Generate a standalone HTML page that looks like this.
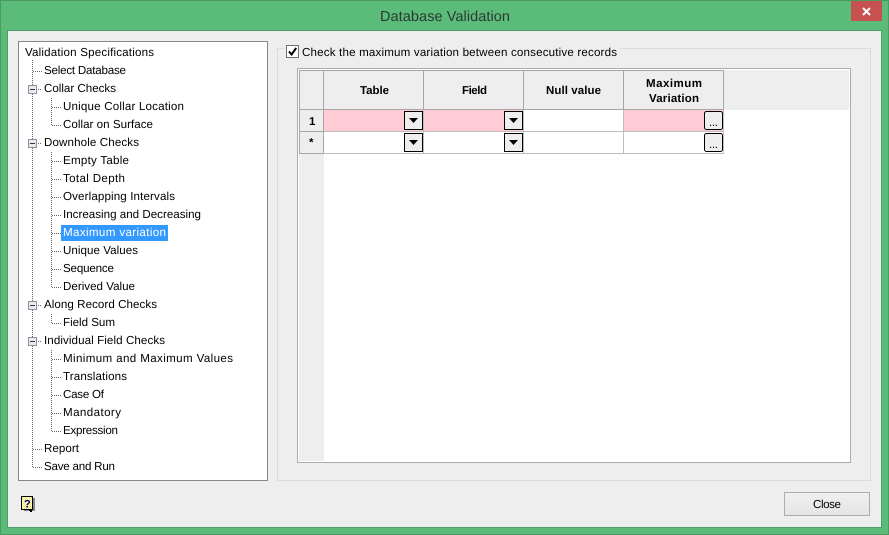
<!DOCTYPE html>
<html><head><meta charset="utf-8"><title>Database Validation</title>
<style>
html,body{margin:0;padding:0;width:889px;height:535px;overflow:hidden;background:#5bbb78}
svg{display:block}
text{font-family:"Liberation Sans",sans-serif;font-size:11.6px;fill:#000;text-rendering:geometricPrecision}
.b{font-weight:bold;font-size:11.5px}
.r{shape-rendering:crispEdges}
</style></head><body>
<svg width="889" height="535" viewBox="0 0 889 535" xmlns="http://www.w3.org/2000/svg">
<defs>
<linearGradient id="g" x1="0" y1="0" x2="0" y2="1"><stop offset="0" stop-color="#f0f0f0"/><stop offset="1" stop-color="#e5e5e5"/></linearGradient>
<pattern id="d" width="2" height="2" patternUnits="userSpaceOnUse"><rect width="2" height="2" fill="#fff"/><rect width="1" height="1" fill="#f2e84a"/><rect x="1" y="1" width="1" height="1" fill="#f2e84a"/></pattern>
</defs>
<g class="r">
<rect x="0" y="0" width="889" height="535" fill="#4b9a63"/>
<rect x="1" y="1" width="887" height="533" fill="#5bbb78"/>
<rect x="7" y="30" width="875" height="498" fill="#4f9f68"/>
<rect x="8" y="31" width="873" height="496" fill="#eeeeee"/>
<rect x="851" y="1" width="31" height="20" fill="#c75050"/>
</g>
<path d="M863 8l7 7M870 8l-7 7" stroke="#fff" stroke-width="2" fill="none"/>
<text x="380" y="21" textLength="130" style="font-size:14.5px;fill:#2a3a34">Database Validation</text>

<!-- tree -->
<g class="r">
<rect x="18.5" y="41.5" width="249" height="439" fill="#fff" stroke="#828790"/>
<rect x="61" y="225" width="107" height="16" fill="#3399ff"/>
</g>
<g class="r" stroke="#666" stroke-dasharray="1 1" fill="none">
<path d="M32.5 60V468M51.500 98V126M51.500 152V288M51.500 314V324M51.500 350V432"/>
<path d="M33 71.500H42M38 89.500H42M38 143.500H42M38 305.500H42M38 341.500H42M33 449.500H42M33 467.500H42"/>
<path d="M52 107.500H61M52 125.500H61M52 161.500H61M52 179.500H61M52 197.500H61M52 215.500H61M52 233.500H61M52 251.500H61M52 269.500H61M52 287.500H61M52 323.500H61M52 359.500H61M52 377.500H61M52 395.500H61M52 413.500H61M52 431.500H61"/>
</g>
<g class="r">
<rect x="28.500" y="85.500" width="8" height="8" fill="#e8ecf0" stroke="#8a929a"/><rect x="30" y="89" width="5" height="1" fill="#334"/>
<rect x="28.500" y="139.500" width="8" height="8" fill="#e8ecf0" stroke="#8a929a"/><rect x="30" y="143" width="5" height="1" fill="#334"/>
<rect x="28.500" y="301.500" width="8" height="8" fill="#e8ecf0" stroke="#8a929a"/><rect x="30" y="305" width="5" height="1" fill="#334"/>
<rect x="28.500" y="337.500" width="8" height="8" fill="#e8ecf0" stroke="#8a929a"/><rect x="30" y="341" width="5" height="1" fill="#334"/>
</g>
<text x="25" y="56" textLength="129">Validation Specifications</text>
<text x="44" y="74" textLength="82">Select Database</text>
<text x="44" y="92" textLength="72">Collar Checks</text>
<text x="63" y="110" textLength="121">Unique Collar Location</text>
<text x="63" y="128" textLength="90">Collar on Surface</text>
<text x="44" y="146" textLength="95">Downhole Checks</text>
<text x="63" y="164" textLength="66">Empty Table</text>
<text x="63" y="182" textLength="62">Total Depth</text>
<text x="63" y="200" textLength="112">Overlapping Intervals</text>
<text x="63" y="218" textLength="138">Increasing and Decreasing</text>
<text x="63" y="236" textLength="103" style="fill:#fff">Maximum variation</text>
<text x="63" y="254" textLength="75">Unique Values</text>
<text x="63" y="272" textLength="51">Sequence</text>
<text x="63" y="290" textLength="72">Derived Value</text>
<text x="44" y="308" textLength="113">Along Record Checks</text>
<text x="63" y="326" textLength="52">Field Sum</text>
<text x="44" y="344" textLength="121">Individual Field Checks</text>
<text x="63" y="362" textLength="170">Minimum and Maximum Values</text>
<text x="63" y="380" textLength="64">Translations</text>
<text x="63" y="398" textLength="41">Case Of</text>
<text x="63" y="416" textLength="58">Mandatory</text>
<text x="63" y="434" textLength="55">Expression</text>
<text x="44" y="452" textLength="35">Report</text>
<text x="44" y="470" textLength="71">Save and Run</text>

<!-- group box -->
<g class="r">
<rect x="277.500" y="48.500" width="593" height="432" fill="none" stroke="#dcdcdc"/>
<rect x="284" y="44" width="336" height="10" fill="#eeeeee"/>
<rect x="286.500" y="45.500" width="12" height="12" fill="#fff" stroke="#707070"/>
</g>
<path d="M289 51.500l2.600 3 4.600-6.500" stroke="#000" stroke-width="2" fill="none"/>
<text x="302" y="56" textLength="315">Check the maximum variation between consecutive records</text>

<!-- grid -->
<g class="r">
<rect x="297.500" y="68.500" width="553" height="394" fill="#fff" stroke="#acacac"/>
<rect x="299" y="70" width="550" height="40" fill="#eeeeee"/>
<rect x="299" y="70" width="25" height="391" fill="#eeeeee"/>
<rect x="324" y="110" width="99" height="21" fill="#ffccd6"/>
<rect x="424" y="110" width="99" height="21" fill="#ffccd6"/>
<rect x="624" y="110" width="99" height="21" fill="#ffccd6"/>
</g>
<g class="r" stroke="#bdbdbd" fill="none">
<path d="M423.500 110V154M523.500 110V154M623.500 110V154M723.500 110V154"/>
<path d="M324 131.500H724M324 153.500H724"/>
</g>
<g class="r" stroke="#a6a6a6" fill="none">
<path d="M299.500 70V154M323.500 70V154M423.500 70V110M523.500 70V110M623.500 70V110M723.500 70V110"/>
<path d="M299 70.500H724M299 109.500H724M299 131.500H324M299 153.500H324"/>
</g>
<g class="r" fill="#eeeeee" stroke="#000">
<rect x="404.500" y="111.500" width="18" height="18"/>
<rect x="404.500" y="133.500" width="18" height="18"/>
<rect x="504.500" y="111.500" width="18" height="18"/>
<rect x="504.500" y="133.500" width="18" height="18"/>
</g>
<path d="M409 118h9l-4.500 5zM409 140h9l-4.500 5zM509 118h9l-4.500 5zM509 140h9l-4.500 5z" fill="#000"/>
<rect x="704.500" y="111.500" width="18" height="18" rx="2" fill="#eeeeee" stroke="#000"/>
<rect x="704.500" y="133.500" width="18" height="18" rx="2" fill="#eeeeee" stroke="#000"/>
<text x="709" y="126" textLength="9">...</text>
<text x="709" y="148" textLength="9">...</text>
<text x="360" y="94" textLength="29" class="b">Table</text>
<text x="462" y="94" textLength="25" class="b">Field</text>
<text x="546" y="94" textLength="55" class="b">Null value</text>
<text x="646" y="87" textLength="56" class="b">Maximum</text>
<text x="649" y="102" textLength="50" class="b">Variation</text>
<text x="309" y="125" textLength="6" class="b">1</text>
<text x="309" y="146" textLength="6" class="b">*</text>

<!-- help -->
<g class="r">
<rect x="24" y="498" width="11" height="13" fill="#8a8a8a"/>
<rect x="21.500" y="496.500" width="11" height="13" fill="url(#d)" stroke="#000"/>
<rect x="29" y="510" width="3" height="1" fill="#000"/>
<rect x="30" y="511" width="2" height="1" fill="#000"/>
</g>
<text x="24" y="507.500" textLength="6.500" class="b" style="font-size:11px;fill:#000080">?</text>

<!-- close -->
<rect class="r" x="784.500" y="492.500" width="85" height="23" fill="url(#g)" stroke="#acacac"/>
<text x="813" y="508" textLength="28">Close</text>
</svg>
</body></html>
